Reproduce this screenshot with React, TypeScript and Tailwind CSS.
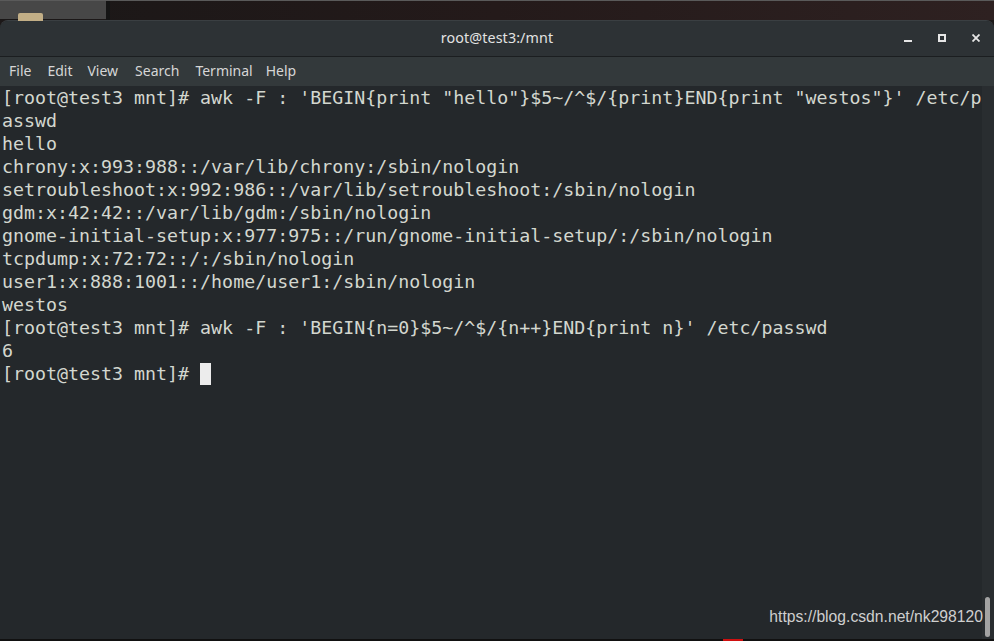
import React from "react";

const lines = [
  `[root@test3 mnt]# awk -F : 'BEGIN{print "hello"}$5~/^$/{print}END{print "westos"}' /etc/p`,
  `asswd`,
  `hello`,
  `chrony:x:993:988::/var/lib/chrony:/sbin/nologin`,
  `setroubleshoot:x:992:986::/var/lib/setroubleshoot:/sbin/nologin`,
  `gdm:x:42:42::/var/lib/gdm:/sbin/nologin`,
  `gnome-initial-setup:x:977:975::/run/gnome-initial-setup/:/sbin/nologin`,
  `tcpdump:x:72:72::/:/sbin/nologin`,
  `user1:x:888:1001::/home/user1:/sbin/nologin`,
  `westos`,
  `[root@test3 mnt]# awk -F : 'BEGIN{n=0}$5~/^$/{n++}END{print n}' /etc/passwd`,
  `6`,
];

export default function App() {
  return (
    <div className="w-[994px] h-[641px] overflow-hidden bg-[#1c1818] flex flex-col relative">
      {/* desktop strip */}
      <div className="h-[20px] shrink-0 border-t border-[#5a5a5a] flex bg-gradient-to-r from-[#1a1717] via-[#241a1a] to-[#2e2121]">
        <div className="w-[106px] h-[18px] bg-[#474747] relative">
          <div className="absolute left-[18px] top-[12px] w-[25px] h-[8px] bg-[#c2ae86] rounded-t-[2px]" />
        </div>
        <div className="w-[4px] bg-[#151515]" />
      </div>
      {/* window */}
      <div className="flex-1 flex flex-col rounded-t-[8px] overflow-hidden bg-[#24282b] border-t border-[#3a3f42] min-h-0">
        {/* titlebar */}
        <div className="h-[36px] shrink-0 bg-[#2d3235] relative flex items-center justify-center border-b border-[#1b1e20]">
          <span className="text-[14.3px] text-[#e2e2e2] font-['Noto_Sans',sans-serif] tracking-[0.1px] -mt-[1px]">
            root@test3:/mnt
          </span>
          <div className="absolute right-0 top-0 h-full">
            <div className="absolute left-[-90px] top-[19px] w-[8px] h-[2px] bg-[#e6e6e6]" />
            <div className="absolute left-[-56px] top-[13px] w-[8px] h-[8px] border-2 border-[#e6e6e6]" />
            <svg className="absolute left-[-22px] top-[13px]" width="8" height="8" viewBox="0 0 8 8">
              <path d="M0.5 0.5 L7.5 7.5 M7.5 0.5 L0.5 7.5" stroke="#e6e6e6" strokeWidth="1.8" />
            </svg>
          </div>
        </div>
        {/* menubar */}
        <div className="h-[29px] shrink-0 bg-[#33393b] flex items-center pl-[9px] pb-[2px] text-[14px] text-[#d6d6d6] font-['Noto_Sans',sans-serif]">
          <span className="mr-[16px]">File</span>
          <span className="mr-[15px]">Edit</span>
          <span className="mr-[17px]">View</span>
          <span className="mr-[16px]">Search</span>
          <span className="mr-[13px]">Terminal</span>
          <span>Help</span>
        </div>
        {/* terminal */}
        <div className="flex-1 flex min-h-0 relative">
          <div className="flex-1 pl-[2px] font-['DejaVu_Sans_Mono',monospace] text-[18.3px] leading-[23px] text-[#d3d7cf] whitespace-pre">
            {lines.map((l, i) => (
              <div key={i} className="h-[23px]">{l}</div>
            ))}
            <div className="h-[23px] flex items-center">
              <span>{"[root@test3 mnt]# "}</span>
              <span className="inline-block w-[11px] h-[22px] bg-[#ececec]" />
            </div>
          </div>
          <div className="w-[12px] shrink-0 bg-[#292d30] relative">
            <div className="absolute left-[3px] bottom-[2px] w-[5px] h-[40px] rounded-full bg-[#a3a3a3]" />
          </div>
          <div className="absolute right-[11px] bottom-[10px] text-[15.7px] text-[#cfcfcf] font-['Liberation_Sans',Arial,sans-serif]">
            https://blog.csdn.net/nk298120
          </div>
        </div>
      </div>
      <div className="h-[2px] shrink-0 bg-[#111] relative">
        <div className="absolute left-[723px] top-0 w-[20px] h-[2px] bg-[#d01010]" />
      </div>
    </div>
  );
}
